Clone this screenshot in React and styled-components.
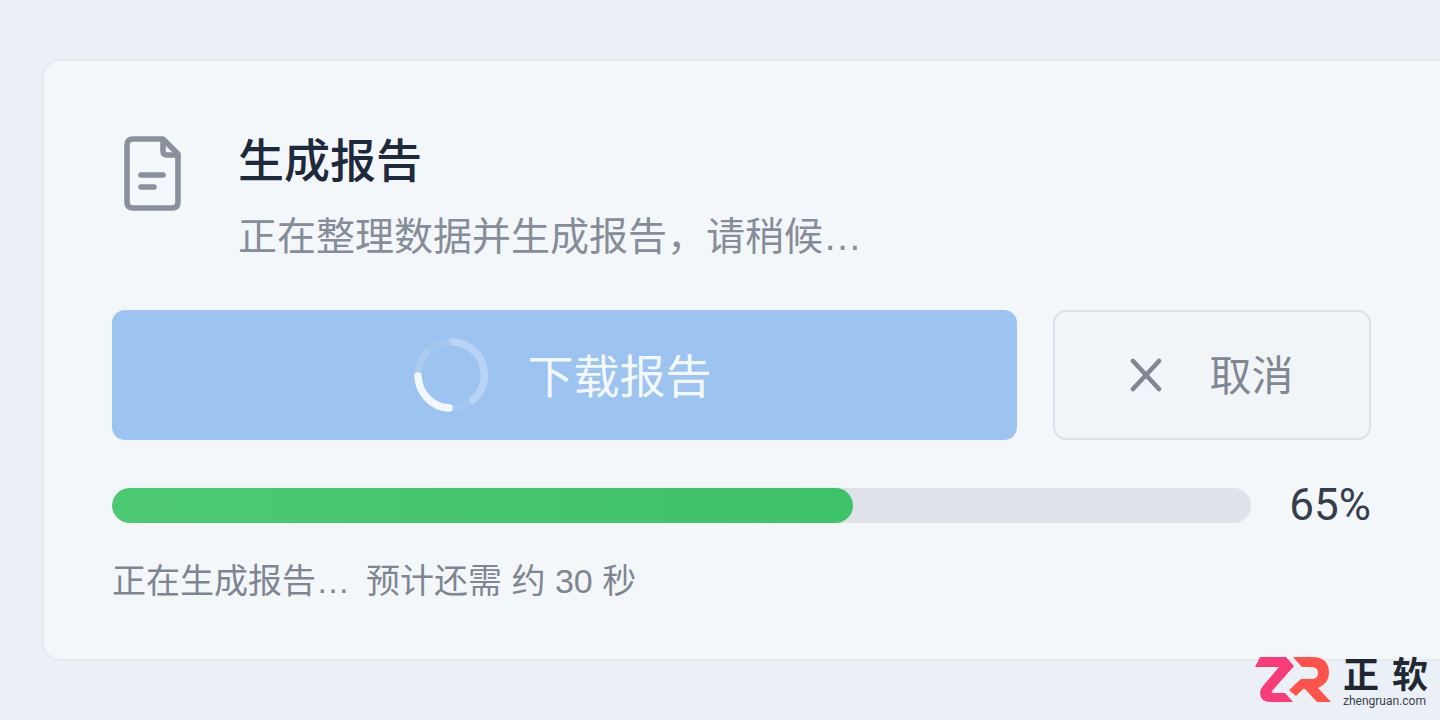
import React from "react";
import styled, { createGlobalStyle } from "styled-components";

const GlobalStyle = createGlobalStyle`
  *, *::before, *::after { box-sizing: border-box; }
  body {
    margin: 0;
    background: #ebeff6;
    font-family: "Liberation Sans", "Noto Sans CJK SC", sans-serif;
    color: #1e293b;
  }
  h1, p { margin: 0; }
`;

const Page = styled.main`
  position: relative;
  min-height: 100vh;
  padding: 59px 0 60px 42px;
  overflow: hidden;
`;

const Card = styled.section`
  padding: 72px 69px 58px 68px;
  border: 2px solid #e5e8ef;
  border-right: 0;
  border-radius: 18px 0 0 18px;
  background: #f3f7fa;
`;

const Header = styled.header`
  display: flex;
  align-items: flex-start;
  gap: 56px;
  padding-left: 12px;
`;

const DocumentIcon = styled.svg`
  flex: none;
  width: 58px;
  height: 80px;
  color: #8a919c;
`;

const Heading = styled.div`
  display: grid;
  gap: 22px;
`;

const Title = styled.h1`
  font-size: 46px;
  font-weight: 500;
  line-height: 56px;
`;

const Subtitle = styled.p`
  font-size: 39px;
  line-height: 52px;
  color: #868d98;
`;

const Actions = styled.div`
  display: grid;
  grid-template-columns: 1fr 318px;
  gap: 36px;
  margin-top: 47px;
`;

const Button = styled.button`
  display: flex;
  align-items: center;
  justify-content: center;
  gap: ${(p) => (p.$primary ? 40 : 47)}px;
  height: 130px;
  padding: ${(p) => (p.$primary ? "0 4px 0 0" : "0")};
  border: ${(p) => (p.$primary ? "0" : "2px solid #dde0e8")};
  border-radius: 13px;
  background: ${(p) => (p.$primary ? "#9dc3f0" : "#f2f5f8")};
  color: ${(p) => (p.$primary ? "#f3f8fe" : "#7f8793")};
  font-family: inherit;
  font-size: ${(p) => (p.$primary ? 46 : 42)}px;
  line-height: 56px;
`;

const ButtonLabel = styled.span`
  padding-top: 3px;
`;

const Spinner = styled.svg`
  width: 74px;
  height: 76px;
`;

const CloseIcon = styled.svg`
  width: 32px;
  height: 34px;
`;

const ProgressRow = styled.div`
  display: flex;
  align-items: center;
  gap: 38px;
  margin-top: 48px;
`;

const Track = styled.div`
  flex: 1;
  height: 35px;
  border-radius: 18px;
  background: #dfe2e9;
  overflow: hidden;
`;

const Fill = styled.div`
  height: 100%;
  border-radius: 18px;
  background: linear-gradient(90deg, #4dc973, #3ec26a);
`;

const Percent = styled.span`
  font-family: Roboto, sans-serif;
  font-size: 44px;
  line-height: 35px;
  color: #363d4c;
`;

const Status = styled.p`
  display: flex;
  gap: 16px;
  margin-top: 38px;
  font-size: 34px;
  line-height: 40px;
  color: #7f8691;
`;

const Brand = styled.a`
  position: absolute;
  right: 12px;
  bottom: 13px;
  display: flex;
  align-items: center;
  gap: 12px;
  color: #1f2832;
  text-decoration: none;
`;

const BrandMark = styled.svg`
  width: 76px;
  height: 48px;
`;

const BrandText = styled.span`
  display: grid;
  min-width: 85px;
`;

const BrandName = styled.span`
  display: flex;
  justify-content: space-between;
  font-size: 36px;
  font-weight: 700;
  line-height: 36px;
`;

const BrandDomain = styled.span`
  font-family: Roboto, sans-serif;
  font-size: 12px;
  line-height: 14px;
  color: #3c434b;
`;

const progress = 65;

export default function App() {
  return (
    <>
      <GlobalStyle />
      <Page>
        <Card aria-labelledby="report-title">
          <Header>
            <DocumentIcon viewBox="0 0 58 80" fill="none" stroke="currentColor" strokeWidth="5.6" strokeLinecap="round" strokeLinejoin="round" aria-hidden="true">
              <path d="M9 6H39L54 21V69Q54 75 48 75H9Q3 75 3 69V12Q3 6 9 6Z" />
              <path d="M39 7V18Q39 22 43 22H53" />
              <path d="M17 42H39M17 54H30" />
            </DocumentIcon>
            <Heading>
              <Title id="report-title">生成报告</Title>
              <Subtitle>正在整理数据并生成报告，请稍候…</Subtitle>
            </Heading>
          </Header>
          <Actions>
            <Button type="button" $primary aria-busy="true">
              <Spinner viewBox="0 0 74 76" fill="none" stroke="#fff" strokeWidth="7.5" strokeLinecap="round" aria-hidden="true">
                <circle cx="37" cy="38" r="33" strokeOpacity=".06" />
                <path d="M39 5A33 33 0 0 1 59 63" strokeOpacity=".24" />
                <path d="M4 38A33 33 0 0 1 13 15" strokeOpacity=".1" />
                <path d="M4 39A33 33 0 0 0 35 71" stroke="#f3f8fe" />
              </Spinner>
              <ButtonLabel>下载报告</ButtonLabel>
            </Button>
            <Button type="button">
              <CloseIcon viewBox="0 0 32 34" fill="none" stroke="currentColor" strokeWidth="4.6" strokeLinecap="round" aria-hidden="true">
                <path d="M3 3L29 31M29 3L3 31" />
              </CloseIcon>
              <ButtonLabel>取消</ButtonLabel>
            </Button>
          </Actions>
          <ProgressRow>
            <Track role="progressbar" aria-label="生成报告" aria-valuenow={progress} aria-valuemin={0} aria-valuemax={100}>
              <Fill style={{ width: `${progress}%` }} />
            </Track>
            <Percent>{progress}%</Percent>
          </ProgressRow>
          <Status>
            <span>正在生成报告…</span>
            <span>预计还需 约 30 秒</span>
          </Status>
        </Card>
        <Brand href="#">
          <BrandMark viewBox="0 3 76 48" overflow="visible" aria-hidden="true">
            <path fill="#f83c78" d="M5 1H31L39 10L17 35Q16 37 18 37H30L38 46H16Q5 46 5 37Q5 33 8 30L24 11H0Z" />
            <path fill="#ff524a" d="M38 1H57Q74 1 74 17Q74 27 63 32L76 46H62L50 33H48L41 40L34 34L46 23H56Q63 23 63 17Q63 11 57 11H47Z" />
          </BrandMark>
          <BrandText>
            <BrandName><span>正</span><span>软</span></BrandName>
            <BrandDomain>zhengruan.com</BrandDomain>
          </BrandText>
        </Brand>
      </Page>
    </>
  );
}
